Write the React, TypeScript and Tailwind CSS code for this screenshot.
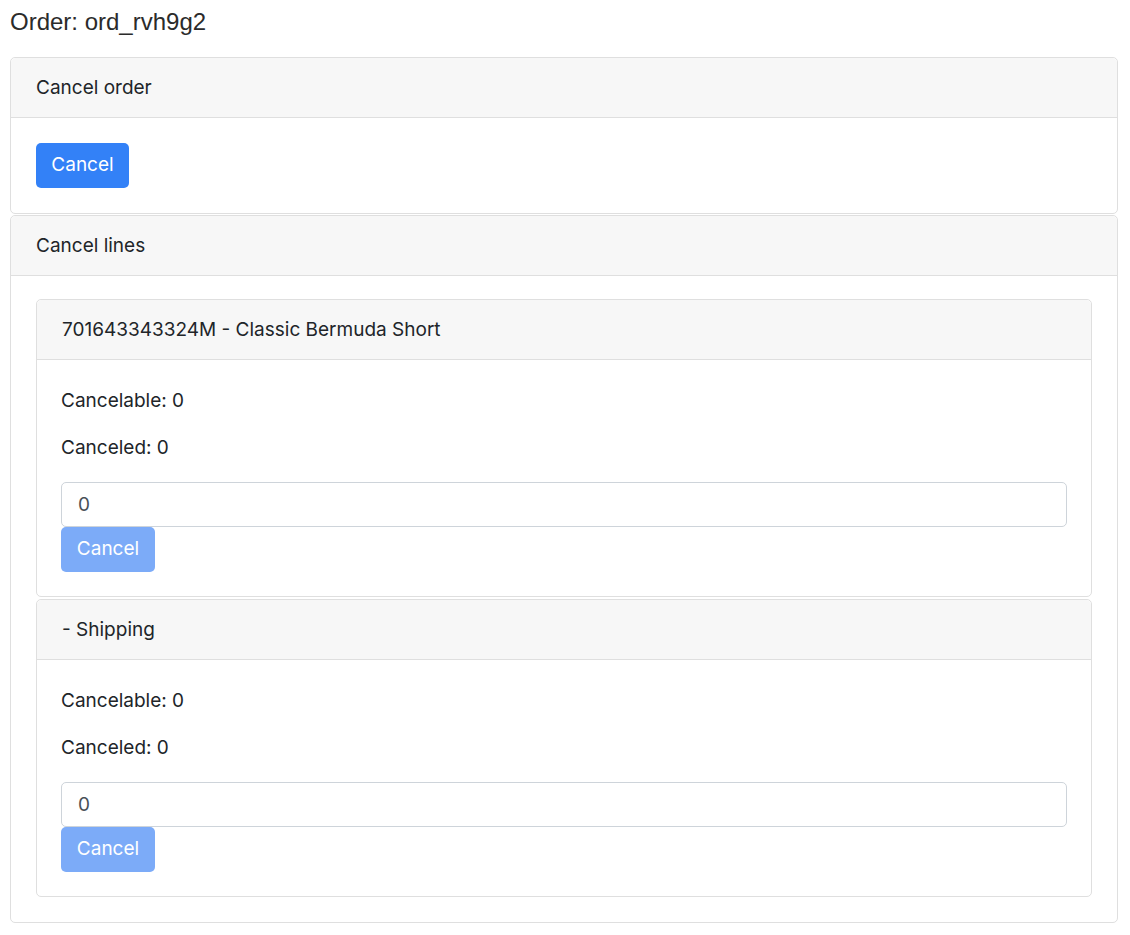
import React from 'react';

const font = { fontFamily: 'Inter, "Noto Sans", sans-serif' };

function Card({ title, children, inner }: { title: string; children: React.ReactNode; inner?: boolean }) {
  return (
    <div className="border border-[#dfdfdf] rounded-[5px] bg-white">
      <div className="px-[25px] pt-[16px] pb-[15px] leading-[28px] bg-[#f7f7f7] border-b border-[#dfdfdf] rounded-t-[5px] text-[#212529] text-[19px]">
        {title}
      </div>
      <div className={inner ? 'px-[24px] pt-[25px] pb-[24px]' : 'p-[25px]'}>{children}</div>
    </div>
  );
}

function LineCard({ title }: { title: string }) {
  return (
    <Card title={title} inner>
      <p className="text-[19px] leading-[27px] text-[#212529] mb-[20px] mt-[2px]">Cancelable: 0</p>
      <p className="text-[19px] leading-[27px] text-[#212529] mb-[21px]">Canceled: 0</p>
      <input
        readOnly
        value="0"
        className="block w-full h-[45px] px-[16px] border border-[#ced4da] rounded-[5px] text-[19px] text-[#495057] outline-none"
        style={font}
      />
      <button
        disabled
        className="block h-[45px] w-[94px] rounded-[5px] bg-[#7cabf8] text-white text-[19px]"
        style={font}
      >
        Cancel
      </button>
    </Card>
  );
}

export default function App() {
  return (
    <div className="pl-[10px] pr-[12px] bg-white min-h-[935px]" style={font}>
      <div
        className="h-[57px] pt-[8px] text-[24px] leading-[28px] text-[#2b2b2b]"
        style={{ fontFamily: '"Liberation Sans", Arial, sans-serif' }}
      >
        Order: ord_rvh9g2
      </div>
      <Card title="Cancel order">
        <button className="block h-[45px] w-[93px] rounded-[5px] bg-[#3381f7] text-white text-[19px]" style={font}>
          Cancel
        </button>
      </Card>
      <div className="mt-[1px]">
        <Card title="Cancel lines">
          <div className="-mt-[2px]">
            <LineCard title="701643343324M - Classic Bermuda Short" />
          </div>
          <div className="mt-[2px]">
            <LineCard title="- Shipping" />
          </div>
        </Card>
      </div>
    </div>
  );
}
